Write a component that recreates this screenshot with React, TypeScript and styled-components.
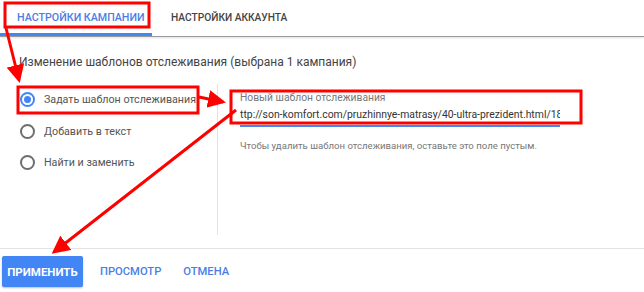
import styled, { createGlobalStyle } from 'styled-components'

const GlobalStyle = createGlobalStyle`
  body {
    margin: 0;
    background: #fff;
    font-family: Roboto, 'Liberation Sans', Arial, sans-serif;
  }
`

const radios = [
  { label: 'Задать шаблон отслеживания', checked: true },
  { label: 'Добавить в текст', checked: false },
  { label: 'Найти и заменить', checked: false },
]

const App = () => {
  return (
    <Page>
      <GlobalStyle />
      <Tabs>
        <Tab active>Настройки кампании</Tab>
        <Tab>Настройки аккаунта</Tab>
      </Tabs>
      <Heading>Изменение шаблонов отслеживания (выбрана 1 кампания)</Heading>
      <Body>
        <Options>
          {radios.map((r) => (
            <OptionRow key={r.label}>
              <Radio checked={r.checked} />
              <span>{r.label}</span>
            </OptionRow>
          ))}
        </Options>
        <Editor>
          <Field>
            <FieldLabel>Новый шаблон отслеживания</FieldLabel>
            <FieldValue>ttp://son-komfort.com/pruzhinnye-matrasy/40-ultra-prezident.html/18</FieldValue>
          </Field>
          <Hint>Чтобы удалить шаблон отслеживания, оставьте это поле пустым.</Hint>
        </Editor>
      </Body>
      <Footer>
        <PrimaryButton>Применить</PrimaryButton>
        <FlatButton>Просмотр</FlatButton>
        <FlatButton>Отмена</FlatButton>
      </Footer>
      <Annotations width="644" height="292" viewBox="0 0 644 292">
        <defs>
          <marker id="head" markerWidth="6" markerHeight="6" refX="5" refY="3" orient="auto" markerUnits="strokeWidth">
            <path d="M0,0 L6,3 L0,6 z" fill="#f00" />
          </marker>
        </defs>
        <g fill="none" stroke="#f00" strokeWidth="3">
          <rect x="5" y="3" width="144" height="24" />
          <rect x="18" y="87" width="180" height="26" />
          <rect x="231" y="91" width="350" height="32" />
          <line x1="6" y1="28" x2="19" y2="80" markerEnd="url(#head)" />
          <line x1="199" y1="97" x2="223" y2="102" markerEnd="url(#head)" />
          <line x1="236" y1="110" x2="54" y2="252" markerEnd="url(#head)" />
        </g>
      </Annotations>
    </Page>
  )
}

const Page = styled.div`
  position: relative;
  width: 644px;
  height: 292px;
  overflow: hidden;
  background: #fff;
`

const Tabs = styled.div`
  display: flex;
  height: 36px;
  border-bottom: 1px solid #9a9a9a;
  box-shadow: 0 1px 2px rgba(0, 0, 0, 0.12);
`

const Tab = styled.div<{ active?: boolean }>`
  display: flex;
  align-items: center;
  box-sizing: border-box;
  width: ${(p) => (p.active ? '152px' : 'auto')};
  padding: 2px 0 0 ${(p) => (p.active ? '17px' : '19px')};
  border-bottom: 3px solid ${(p) => (p.active ? '#4285f4' : 'transparent')};
  font-size: ${(p) => (p.active ? '10.7px' : '10.2px')};
  font-weight: 500;
  text-transform: uppercase;
  color: ${(p) => (p.active ? '#4a7ee6' : '#444')};
`

const Heading = styled.div`
  margin: 15px 0 0 19px;
  height: 20px;
  line-height: 20px;
  font-size: 12px;
  color: #444;
`

const Body = styled.div`
  display: flex;
  margin-top: 12px;
  height: 151px;
`

const Options = styled.div`
  width: 217px;
  border-right: 1px solid #e3e3e3;
`

const OptionRow = styled.div`
  display: flex;
  align-items: center;
  height: 31.5px;
  padding-left: 20px;
  gap: 9px;
  font-size: 10.7px;
  color: #555;
`

const Radio = styled.span<{ checked?: boolean }>`
  position: relative;
  box-sizing: border-box;
  width: 15px;
  height: 15px;
  border-radius: 50%;
  border: 2px solid ${(p) => (p.checked ? '#4285f4' : '#6e6e6e')};
  &::after {
    content: '';
    display: ${(p) => (p.checked ? 'block' : 'none')};
    position: absolute;
    left: 2px;
    top: 2px;
    width: 7px;
    height: 7px;
    border-radius: 50%;
    background: #4285f4;
  }
`

const Editor = styled.div`
  padding: 6px 0 0 22px;
`

const Field = styled.div`
  width: 320px;
  border-bottom: 2px solid #4285f4;
  padding-bottom: 1px;
`

const FieldLabel = styled.div`
  font-size: 10.3px;
  line-height: 16px;
  color: #777;
`

const FieldValue = styled.div`
  font-size: 10.4px;
  line-height: 18px;
  color: #333;
  white-space: nowrap;
  overflow: hidden;
`

const Hint = styled.div`
  margin-top: 13px;
  font-size: 9.6px;
  color: #777;
`

const Footer = styled.div`
  display: flex;
  align-items: center;
  margin-top: 13px;
  border-top: 1px solid #e3e3e3;
  padding: 7px 0 0 2px;
`

const PrimaryButton = styled.div`
  display: flex;
  align-items: center;
  justify-content: center;
  width: 81px;
  height: 31px;
  border-radius: 2px;
  background: #4285f4;
  box-shadow: 0 1px 2px rgba(0, 0, 0, 0.25);
  color: #fff;
  font-size: 11.5px;
  font-weight: 700;
  text-transform: uppercase;
`

const FlatButton = styled.div`
  padding: 0 5px 0 17px;
  font-size: 11.2px;
  font-weight: 500;
  text-transform: uppercase;
  color: #4a7ee6;
`

const Annotations = styled.svg`
  position: absolute;
  left: 0;
  top: 0;
  pointer-events: none;
`

export default App
